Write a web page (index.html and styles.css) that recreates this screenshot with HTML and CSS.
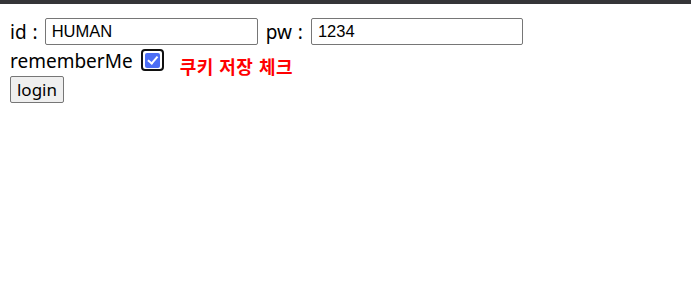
FILE: index.html
```html
<!DOCTYPE html>
<html lang="ko">
<head>
<meta charset="utf-8">
<title>login</title>
<link rel="stylesheet" href="styles.css">
</head>
<body>
<div class="topbar"></div>
<form class="login">
  <div class="row row-fields">
    <label class="lbl" for="id">id :</label>
    <input class="field" id="id" type="text" value="HUMAN">
    <label class="lbl lbl-pw" for="pw">pw :</label>
    <input class="field field-pw" id="pw" type="text" value="1234">
  </div>
  <div class="row row-remember">
    <label class="lbl" for="rm">rememberMe</label>
    <span class="check-wrap"><input class="check" id="rm" type="checkbox" checked></span>
    <span class="note">쿠키 저장 체크</span>
  </div>
  <button class="btn" type="button">login</button>
</form>
</body>
</html>
```
FILE: styles.css
```css
html, body {
  margin: 0;
  padding: 0;
  background: #ffffff;
}
body {
  font-family: "Noto Sans", "Noto Sans CJK KR", sans-serif;
  color: #000;
}
.topbar {
  height: 4px;
  background: #353538;
}
.login {
  padding: 14px 10px 0 10px;
}
.row {
  display: flex;
}
.row-fields {
  align-items: center;
  height: 27px;
}
.lbl {
  font-size: 19px;
  line-height: 24px;
  white-space: nowrap;
}
.row-fields .lbl {
  word-spacing: 1px;
}
.field {
  box-sizing: border-box;
  width: 213px;
  height: 27px;
  margin: 0 0 0 7px;
  padding: 0 6px;
  border: 1px solid #767676;
  border-radius: 2px;
  font-family: "Liberation Sans", Arial, sans-serif;
  font-size: 16.5px;
  color: #000;
  background: #fff;
  outline: none;
}
.field-pw {
  width: 212px;
  margin-left: 8px;
}
.lbl-pw {
  margin-left: 8px;
}
.row-remember {
  height: 31px;
  align-items: flex-start;
}
.row-remember .lbl {
  margin-top: 4px;
}
.check-wrap {
  box-sizing: border-box;
  width: 23px;
  height: 22px;
  margin: 4px 0 0 8px;
  border: 2px solid #101010;
  border-radius: 4px;
  display: flex;
  align-items: center;
  justify-content: center;
}
.check {
  appearance: none;
  -webkit-appearance: none;
  margin: 0;
  width: 15px;
  height: 15px;
  border-radius: 2px;
  background: #4c6ef5;
  position: relative;
}
.check::after {
  content: "";
  position: absolute;
  left: 5px;
  top: 1.5px;
  width: 3.5px;
  height: 7.5px;
  border: solid #fff;
  border-width: 0 2px 2px 0;
  transform: rotate(40deg);
}
.note {
  margin: 11px 0 0 16px;
  font-family: "Noto Sans CJK KR", sans-serif;
  font-size: 18px;
  font-weight: 700;
  letter-spacing: 0.5px;
  line-height: 20px;
  color: #ff0000;
  white-space: nowrap;
}
.btn {
  display: block;
  box-sizing: border-box;
  width: 54px;
  height: 27px;
  margin: 0;
  padding: 0;
  border: 1px solid #767676;
  border-radius: 2px;
  background: #efefef;
  font-family: "Noto Sans", sans-serif;
  font-size: 17px;
  line-height: 24px;
  color: #000;
}
```
